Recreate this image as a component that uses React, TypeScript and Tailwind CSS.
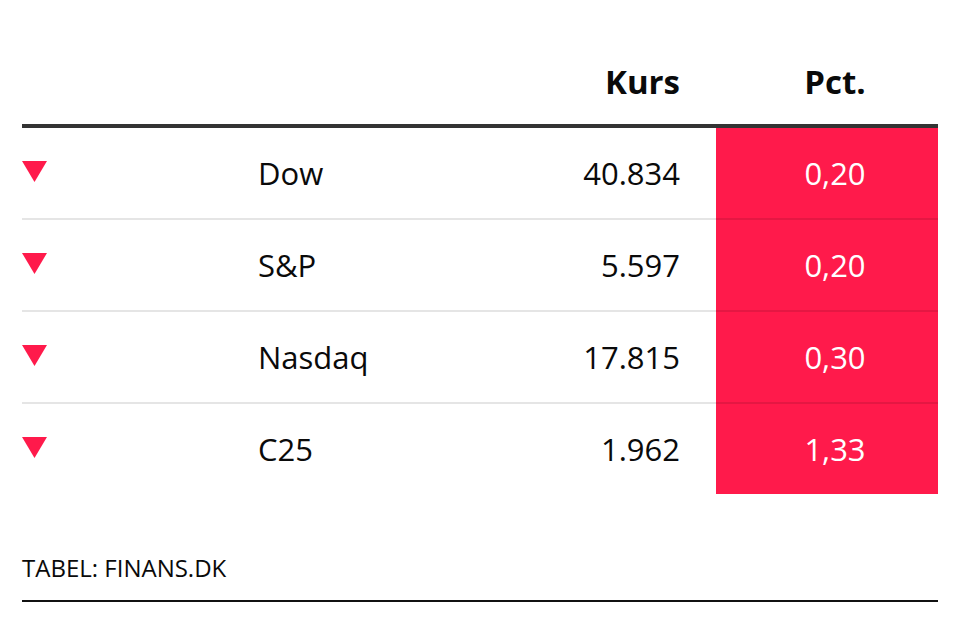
const rows = [
  { name: "Dow", kurs: "40.834", pct: "0,20" },
  { name: "S&P", kurs: "5.597", pct: "0,20" },
  { name: "Nasdaq", kurs: "17.815", pct: "0,30" },
  { name: "C25", kurs: "1.962", pct: "1,33" },
];

const DownArrow = () => (
  <svg width="25" height="21" viewBox="0 0 25 21" className="-mt-1">
    <polygon points="0,0 25,0 12.5,21" fill="#ff1a4b" />
  </svg>
);

const App = () => {
  return (
    <div className="min-h-screen bg-white px-[22px] text-[#0a0a0a] font-['Open_Sans',sans-serif]">
      {/* header */}
      <div className="grid h-[128px] grid-cols-[236px_1fr_200px_222px] items-end border-b-4 border-[#333] pb-[22px] text-[33px] font-bold leading-[40px]">
        <div />
        <div />
        <div className="pr-[36px] text-right">Kurs</div>
        <div className="pl-4 text-center">Pct.</div>
      </div>

      {/* rows */}
      <div className="grid grid-cols-[236px_1fr_200px_222px] text-[31px] leading-[40px]">
        {rows.map((r, i) => {
          const last = i === rows.length - 1;
          const cell = last ? "h-[90px]" : "h-[92px] border-b-2 border-black/10";
          return (
            <div key={r.name} className="contents">
              <div className={`flex items-center ${cell}`}>
                <DownArrow />
              </div>
              <div className={`flex items-center ${cell}`}>{r.name}</div>
              <div className={`flex items-center justify-end pr-[36px] ${cell}`}>{r.kurs}</div>
              <div className={`flex items-center justify-center bg-[#ff1a4b] pl-4 text-white ${cell}`}>
                {r.pct}
              </div>
            </div>
          );
        })}
      </div>

      {/* source */}
      <div className="mt-[58px] border-b-2 border-[#111] pb-[16px] text-[24px] leading-[32px]">
        TABEL: FINANS.DK
      </div>
    </div>
  );
};

export default App;
